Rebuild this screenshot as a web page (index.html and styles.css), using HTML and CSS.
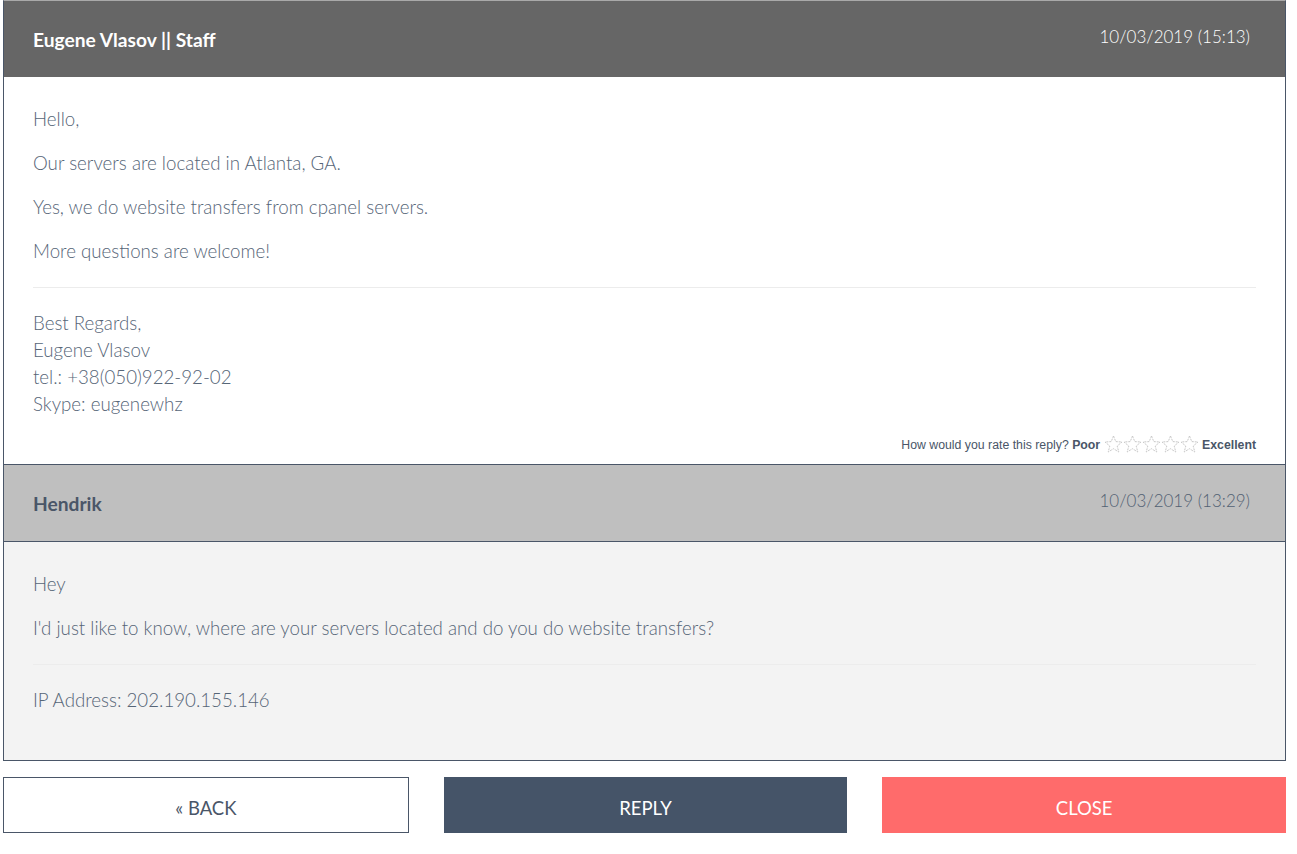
FILE: index.html
```html
<!DOCTYPE html>
<html>

<head>
  <meta name="viewport" content="width=device-width, initial-scale=1">
  <meta charset="UTF-8">
  <title>Ticket</title>
  <link rel="stylesheet" href="styles.css">
</head>

<body>

  <div class="thread">
    <div class="msg staff">
      <div class="msg-head">
        <span class="author">Eugene Vlasov || Staff</span>
        <span class="date">10/03/2019 (15:13)</span>
      </div>
      <div class="msg-body">
        <p>Hello,</p>
        <p>Our servers are located in Atlanta, GA.</p>
        <p>Yes, we do website transfers from cpanel servers.</p>
        <p>More questions are welcome!</p>
        <hr>
        <div class="sig">
          Best Regards,<br>
          Eugene Vlasov<br>
          tel.: +38(050)922-92-02<br>
          Skype: eugenewhz
        </div>
        <div class="rate">
          How would you rate this reply? <b>Poor</b>
          <span class="stars">
            <svg width="19" height="18" viewBox="0 0 19 18"><path d="M9.5 1 L11.8 6.6 L18 7 L13.2 11 L14.8 17 L9.5 13.7 L4.2 17 L5.8 11 L1 7 L7.2 6.6 Z" /></svg><svg width="19" height="18" viewBox="0 0 19 18"><path d="M9.5 1 L11.8 6.6 L18 7 L13.2 11 L14.8 17 L9.5 13.7 L4.2 17 L5.8 11 L1 7 L7.2 6.6 Z" /></svg><svg width="19" height="18" viewBox="0 0 19 18"><path d="M9.5 1 L11.8 6.6 L18 7 L13.2 11 L14.8 17 L9.5 13.7 L4.2 17 L5.8 11 L1 7 L7.2 6.6 Z" /></svg><svg width="19" height="18" viewBox="0 0 19 18"><path d="M9.5 1 L11.8 6.6 L18 7 L13.2 11 L14.8 17 L9.5 13.7 L4.2 17 L5.8 11 L1 7 L7.2 6.6 Z" /></svg><svg width="19" height="18" viewBox="0 0 19 18"><path d="M9.5 1 L11.8 6.6 L18 7 L13.2 11 L14.8 17 L9.5 13.7 L4.2 17 L5.8 11 L1 7 L7.2 6.6 Z" /></svg>
          </span>
          <b>Excellent</b>
        </div>
      </div>
    </div>

    <div class="msg client">
      <div class="msg-head">
        <span class="author">Hendrik</span>
        <span class="date">10/03/2019 (13:29)</span>
      </div>
      <div class="msg-body">
        <p>Hey</p>
        <p>I'd just like to know, where are your servers located and do you do website transfers?</p>
        <hr>
        <div class="sig">IP Address: 202.190.155.146</div>
      </div>
    </div>
  </div>

  <div class="actions">
    <a href="#" class="btn back">&laquo; BACK</a>
    <a href="#" class="btn reply">REPLY</a>
    <a href="#" class="btn close">CLOSE</a>
  </div>

</body>

</html>
```
FILE: styles.css
```css
body {
  margin: 0;
  padding: 0 11px 0 3px;
  font-family: Lato, "Source Sans Pro", "Liberation Sans", sans-serif;
  color: #566577;
  background: #fff;
}

.thread {
  border: 1px solid #4a5668;
  border-top-color: #a9a9a9;
}

.msg-head {
  height: 76px;
  display: flex;
  align-items: center;
  justify-content: space-between;
  padding: 0 35px 0 29px;
}

.staff .msg-head {
  background: #666666;
  color: #fff;
}

.client .msg-head {
  background: #bfbfbf;
  color: #4a5668;
  border-top: 1px solid #4a5668;
  border-bottom: 1px solid #4a5668;
}

.author {
  font-size: 19.2px;
  font-weight: 700;
  margin-top: 0;
}

.date {
  font-size: 17px;
  font-weight: 300;
  margin-top: -6px;
}

.client .date {
  color: #526173;
}

.msg-body {
  padding: 29px 29px 11px;
  font-size: 18.7px;
  font-weight: 300;
  line-height: 27px;
}

.client .msg-body {
  background: #f3f3f3;
  padding-bottom: 46px;
}

.msg-body p {
  margin: 0 0 17px;
}

.msg-body hr {
  border: 0;
  border-top: 1px solid #ececec;
  margin: 22px 0 22px;
}

.rate {
  margin-top: 17px;
  text-align: right;
  font-family: "Liberation Sans", Arial, sans-serif;
  font-size: 12.3px;
  font-weight: 400;
  line-height: 16px;
  color: #4a5668;
}

.stars {
  display: inline-flex;
  vertical-align: -4px;
}

.stars svg {
  fill: #fff;
  stroke: #c8c8c8;
  stroke-width: 1;
  stroke-dasharray: 2 1;
}

.actions {
  display: flex;
  gap: 35px;
  margin-top: 16px;
}

.btn {
  flex: 1;
  height: 56px;
  box-sizing: border-box;
  display: flex;
  align-items: center;
  justify-content: center;
  padding-top: 6px;
  font-size: 18.5px;
  text-decoration: none;
  text-transform: uppercase;
}

.back {
  border: 1px solid #4a5668;
  color: #4a5668;
  background: #fff;
}

.reply {
  background: #455468;
  color: #fff;
}

.close {
  background: #ff6b6b;
  color: #fff;
}
```
